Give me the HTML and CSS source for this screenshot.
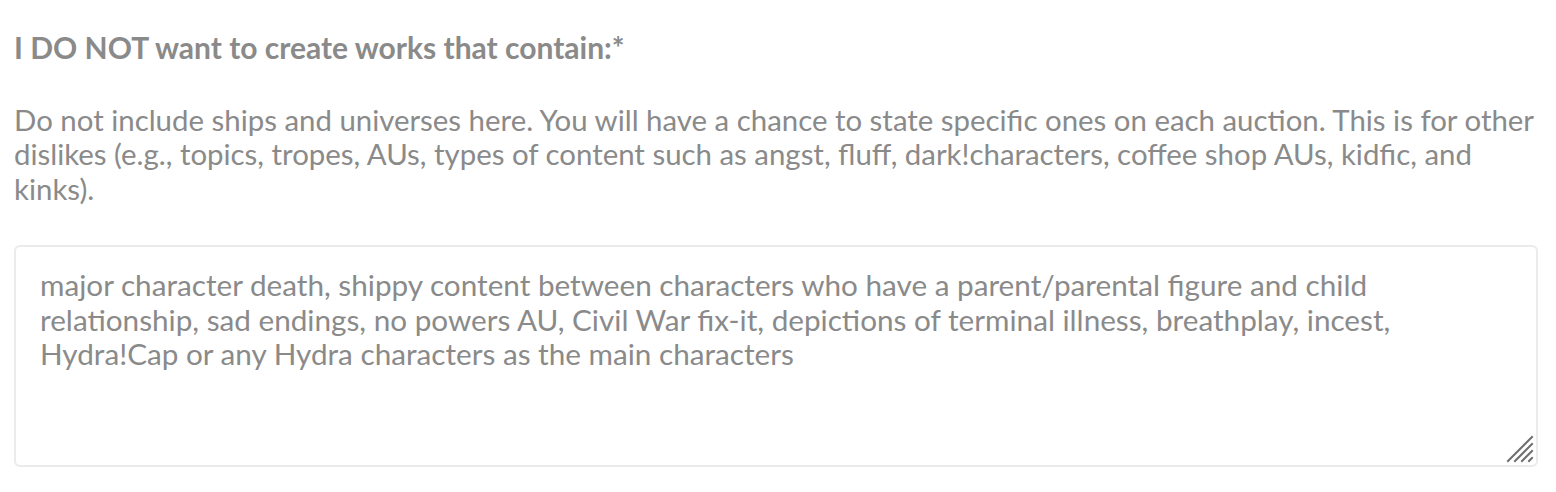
FILE: index.html
```html
<!DOCTYPE html>
<html>
<head>
<meta charset="utf-8">
<link rel="stylesheet" href="styles.css">
</head>
<body>
<div class="field">
  <label class="field-label" for="dislikes">I DO NOT want to create works that contain:*</label>
  <p class="field-help">Do not include ships and universes here. You will have a chance to state specific ones on each auction. This is for other dislikes (e.g., topics, tropes, AUs, types of content such as angst, fluff, dark!characters, coffee shop AUs, kidfic, and kinks).</p>
  <div class="input-wrap">
    <textarea id="dislikes" class="field-input">major character death, shippy content between characters who have a parent/parental figure and child relationship, sad endings, no powers AU, Civil War fix-it, depictions of terminal illness, breathplay, incest, Hydra!Cap or any Hydra characters as the main characters</textarea>
    <svg class="grip" width="28" height="28" viewBox="0 0 28 28" aria-hidden="true">
      <path d="M2 26 L26 2 M9 26 L26 9 M16 26 L26 16 M23 26 L26 23" stroke="#6f6f6f" stroke-width="2" stroke-linecap="square" fill="none"/>
    </svg>
  </div>
</div>
</body>
</html>
```
FILE: styles.css
```css
html, body {
  margin: 0;
  padding: 0;
  background: #ffffff;
}
body {
  font-family: Lato, "Open Sans", sans-serif;
  font-size: 29.4px;
  line-height: 34.5px;
  color: #8a8a8a;
}
.field {
  display: flex;
  flex-direction: column;
  padding: 30px 14px 0 14px;
}
.field-label {
  font-size: 30px;
  font-weight: 700;
  color: #8a8a8a;
}
.field-help {
  margin: 38px 0 39px 0;
}
.input-wrap {
  position: relative;
  margin-right: 4px;
}
.field-input {
  display: block;
  box-sizing: border-box;
  width: 100%;
  height: 222px;
  margin: 0;
  padding: 21px 110px 22px 24px;
  border: 2px solid #ebebeb;
  border-radius: 6px;
  font-family: Lato, "Open Sans", sans-serif;
  font-size: 29.7px;
  line-height: 34.5px;
  color: #8a8a8a;
  background: #ffffff;
  resize: none;
  outline: none;
  overflow: hidden;
}
.grip {
  position: absolute;
  right: 4px;
  bottom: 4px;
  pointer-events: none;
}
```
